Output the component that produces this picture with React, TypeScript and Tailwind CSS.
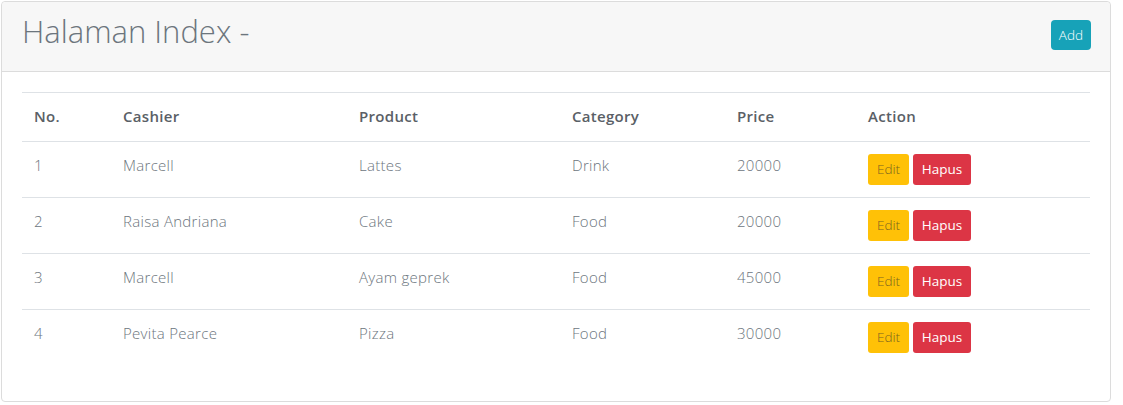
const rows = [
  { no: 1, cashier: "Marcell", product: "Lattes", category: "Drink", price: 20000 },
  { no: 2, cashier: "Raisa Andriana", product: "Cake", category: "Food", price: 20000 },
  { no: 3, cashier: "Marcell", product: "Ayam geprek", category: "Food", price: 45000 },
  { no: 4, cashier: "Pevita Pearce", product: "Pizza", category: "Food", price: 30000 },
];

export default function App() {
  return (
    <div
      className="h-[405px] w-[1123px] bg-white pl-px pt-px text-[15px] tracking-[0.3px] text-[#6c757d]"
      style={{ fontFamily: "'Open Sans', Lato, sans-serif" }}
    >
      <div className="flex h-[401px] w-[1110px] flex-col rounded border border-[#dcdcdc] bg-white">
        <div className="flex h-[70px] items-start justify-between rounded-t border-b border-[#dcdcdc] bg-[#f7f7f7] pl-[20px] pr-[19px] pt-[14px]">
          <h1 className="text-[31px] font-light leading-[31px] tracking-normal text-[#6c757d]">Halaman Index -</h1>
          <button className="mt-[4px] h-[30px] rounded bg-[#17a2b8] px-[8px] text-[13.5px] font-light tracking-normal text-white">
            Add
          </button>
        </div>
        <div className="px-[20px] pt-[20px]">
          <table className="w-full border-collapse text-left">
            <thead>
              <tr className="h-[49px] border-t border-b border-[#dee2e6]">
                <th className="w-[89px] pl-3 pb-px font-semibold text-[#5a6066]">No.</th>
                <th className="w-[236px] pl-3 pb-px font-semibold text-[#5a6066]">Cashier</th>
                <th className="w-[213px] pl-3 pb-px font-semibold text-[#5a6066]">Product</th>
                <th className="w-[165px] pl-3 pb-px font-semibold text-[#5a6066]">Category</th>
                <th className="w-[131px] pl-3 pb-px font-semibold text-[#5a6066]">Price</th>
                <th className="pl-3 pb-px font-semibold text-[#5a6066]">Action</th>
              </tr>
            </thead>
            <tbody>
              {rows.map((r, i) => (
                <tr
                  key={r.no}
                  className={`h-[56px] align-top ${i < rows.length - 1 ? "border-b border-[#dee2e6]" : ""}`}
                >
                  <td className="pl-3 pt-[12px] font-light">{r.no}</td>
                  <td className="pl-3 pt-[12px] font-light">{r.cashier}</td>
                  <td className="pl-3 pt-[12px] font-light">{r.product}</td>
                  <td className="pl-3 pt-[12px] font-light">{r.category}</td>
                  <td className="pl-3 pt-[12px] font-light">{r.price}</td>
                  <td className="pl-3 pt-[12px]">
                    <div className="flex gap-[4px] tracking-normal">
                      <button className="h-[31px] w-[41px] rounded-[3px] bg-[#ffc107] text-[13.5px] font-light text-[#7a6420]">
                        Edit
                      </button>
                      <button className="h-[31px] w-[58px] rounded-[3px] bg-[#dc3545] text-[13.5px] text-white">
                        Hapus
                      </button>
                    </div>
                  </td>
                </tr>
              ))}
            </tbody>
          </table>
        </div>
      </div>
    </div>
  );
}
